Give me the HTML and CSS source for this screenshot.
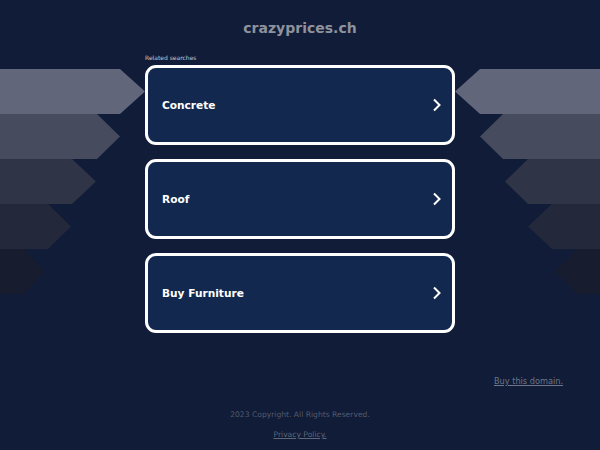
FILE: index.html
```html
<!DOCTYPE html>
<html>
<head>
<meta charset="utf-8">
<link rel="stylesheet" href="styles.css">
</head>
<body>
<svg class="deco" width="600" height="450" viewBox="0 0 600 450" aria-hidden="true">
  <polygon points="0,69 120,69 145,91.5 120,114 0,114" fill="#62667a"/>
  <polygon points="0,114 97,114 120,136.5 97,159 0,159" fill="#464b5e"/>
  <polygon points="0,159 72,159 96,181.5 72,204 0,204" fill="#2f3447"/>
  <polygon points="0,204 48,204 71,226.5 48,249 0,249" fill="#23283b"/>
  <polygon points="0,249 24,249 45,271.5 24,294 0,294" fill="#171c2f"/>
  <polygon points="600,69 480,69 455,91.5 480,114 600,114" fill="#62667a"/>
  <polygon points="600,114 503,114 480,136.5 503,159 600,159" fill="#464b5e"/>
  <polygon points="600,159 528,159 505,181.5 528,204 600,204" fill="#2f3447"/>
  <polygon points="600,204 552,204 528,226.5 552,249 600,249" fill="#23283b"/>
  <polygon points="600,249 577,249 555,271.5 577,294 600,294" fill="#171c2f"/>
</svg>
<div class="page">
  <header class="header">
    <h1 class="title">crazyprices.ch</h1>
  </header>
  <main class="main">
    <div class="related">Related searches</div>
    <div class="cards">
      <a class="card" href="#"><span class="label">Concrete</span><svg class="chev" width="10" height="14" viewBox="0 0 10 14"><path d="M2 1.5 L7.5 7 L2 12.5" fill="none" stroke="#fff" stroke-width="2"/></svg></a>
      <a class="card" href="#"><span class="label">Roof</span><svg class="chev" width="10" height="14" viewBox="0 0 10 14"><path d="M2 1.5 L7.5 7 L2 12.5" fill="none" stroke="#fff" stroke-width="2"/></svg></a>
      <a class="card" href="#"><span class="label">Buy Furniture</span><svg class="chev" width="10" height="14" viewBox="0 0 10 14"><path d="M2 1.5 L7.5 7 L2 12.5" fill="none" stroke="#fff" stroke-width="2"/></svg></a>
    </div>
  </main>
  <div class="buy"><a href="#" class="buy-link">Buy this domain.</a></div>
  <footer class="footer">
    <div class="copy">2023 Copyright. All Rights Reserved.</div>
    <a href="#" class="privacy">Privacy Policy.</a>
  </footer>
</div>
</body>
</html>
```
FILE: styles.css
```css
html, body {
  margin: 0;
  padding: 0;
  width: 600px;
  height: 450px;
  overflow: hidden;
  background: #101c38;
  font-family: "DejaVu Sans", Verdana, sans-serif;
}
.deco {
  position: absolute;
  left: 0;
  top: 0;
  z-index: 0;
}
.page {
  position: relative;
  z-index: 1;
  display: flex;
  flex-direction: column;
  height: 450px;
}
.header {
  height: 54px;
  display: flex;
  align-items: center;
  justify-content: center;
}
.title {
  margin: 0;
  padding-top: 2px;
  font-size: 14px;
  font-weight: bold;
  color: #8e929c;
}
.main {
  width: 310px;
  margin: 0 auto;
}
.related {
  font-size: 6px;
  color: #c6c9d1;
  height: 11px;
  line-height: 8px;
}
.cards {
  display: flex;
  flex-direction: column;
  gap: 14px;
}
.card {
  box-sizing: border-box;
  height: 80px;
  border: 3px solid #ffffff;
  border-radius: 11px;
  background: #13284f;
  display: flex;
  align-items: center;
  justify-content: space-between;
  padding: 0 10px 0 14px;
  text-decoration: none;
}
.label {
  color: #ffffff;
  font-weight: bold;
  font-size: 10.6px;
}
.chev {
  display: block;
}
.buy {
  width: 563px;
  display: flex;
  justify-content: flex-end;
  margin-top: 43px;
}
.buy-link {
  font-size: 8.2px;
  color: #6e7584;
}
.footer {
  margin-top: 24px;
  display: flex;
  flex-direction: column;
  align-items: center;
  gap: 11px;
}
.copy {
  font-size: 7.6px;
  color: #545b6d;
}
.privacy {
  font-size: 7.6px;
  color: #5f6677;
}
```
